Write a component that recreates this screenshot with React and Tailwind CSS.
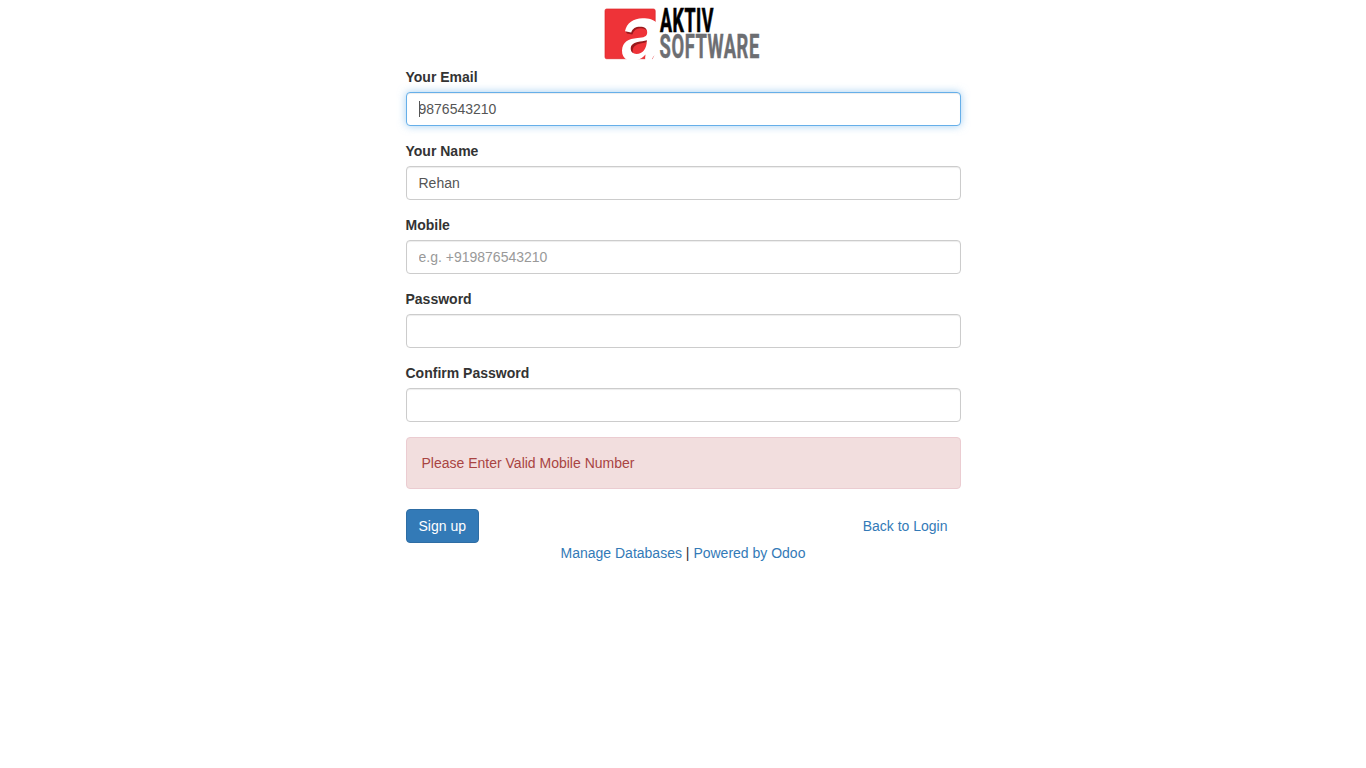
const inputBase =
  'block h-[34px] w-full rounded-[4px] border bg-white px-3 py-1.5 text-[14px] leading-5 text-[#555555] outline-none placeholder:text-[#999999]';
const inputIdle = 'border-[#cccccc] shadow-[inset_0_1px_1px_rgba(0,0,0,0.075)]';
const inputFocused =
  'border-[#66afe9] shadow-[inset_0_1px_1px_rgba(0,0,0,0.075),0_0_8px_rgba(102,175,233,0.6)]';

function Logo() {
  return (
    <svg width="156" height="52" viewBox="604 8 156 52" className="block overflow-visible" role="img" aria-label="Aktiv Software">
      <path
        d="M606.5 9H653.5Q655.2 9 655.2 10.7V52L652.3 58.7H606.5Q605 58.7 605 57V10.7Q605 9 606.5 9Z"
        fill="#ee3338"
        stroke="#dc2529"
        strokeWidth="0.7"
      />
      <path d="M625.5 31.2L627 33.4L632.3 34.4C633.5 30.8 636 28.6 640 28.3C643.5 28 645.5 29 646.8 31L645 26L635 25L630 30Z" fill="#99191c" />
      <path d="M647 39.5C637 41 630.5 42.5 630.5 49C630.5 51.5 631.5 53 633 53.8C631.5 47 635.5 44.3 640.5 43.4C643.5 43 645.5 42.5 647 41.5Z" fill="#99191c" />
      <path
        fillRule="evenodd"
        fill="#ffffff"
        d="M625 31.3C626.5 23 633.5 18.2 642.5 18.2C649 18.2 653.8 19.6 656.4 22.5V54.5C653.8 55.5 652.8 57 651.8 60H645.3C645 58.5 645.2 57 645.5 54.6C642.5 58.3 640 59.3 637 60H627.5C623.8 58.3 621.9 55 622 50.5C622.5 42 628.3 38.8 637.5 38C644 37.4 647.2 36.7 647.2 32.2C647.2 28.5 644.5 26.7 640.2 26.7C635.3 26.7 632.8 28.4 631.2 32.4ZM646.9 40.3C644 41.3 641 41.2 637.5 42C633 43 630.7 45.2 630.7 48.6C630.7 52 633 54 636.5 54C642.5 54 646.7 49.2 646.9 40.3Z"
      />
      <text
        x="660"
        y="31.9"
        fontFamily="Roboto, 'Liberation Sans', sans-serif"
        fontWeight="700"
        fontSize="33"
        letterSpacing="1"
        textLength="54"
        lengthAdjust="spacingAndGlyphs"
        fill="#000000"
        stroke="#000000"
        strokeWidth="0.7"
      >
        AKTIV
      </text>
      <text
        x="659.6"
        y="58.3"
        fontFamily="Roboto, 'Liberation Sans', sans-serif"
        fontWeight="700"
        fontSize="33"
        letterSpacing="1"
        textLength="100.2"
        lengthAdjust="spacingAndGlyphs"
        fill="#6d6e72"
        stroke="#6d6e72"
        strokeWidth="0.5"
      >
        SOFTWARE
      </text>
    </svg>
  );
}

function Field({ label, type = 'text', value, placeholder, focused }) {
  return (
    <label className="mb-[15px] block">
      <span className="mb-[5px] block font-bold">{label}</span>
      <span className="relative block">
        <input
          type={type}
          defaultValue={value}
          placeholder={placeholder}
          className={`${inputBase} ${focused ? inputFocused : inputIdle}`}
        />
        {focused && <span className="absolute left-[13px] top-[9px] h-4 w-px bg-[#555555]" />}
      </span>
    </label>
  );
}

export default function App() {
  return (
    <main className="min-h-screen bg-white font-['Liberation_Sans',Arial,sans-serif] text-[14px] leading-5 text-[#333333]">
      <div className="mx-auto w-[555px]">
        <div className="flex h-[67px] justify-center pt-2 pr-[2px]">
          <Logo />
        </div>
        <form>
          <Field label="Your Email" value="9876543210" focused />
          <Field label="Your Name" value="Rehan" />
          <Field label="Mobile" placeholder="e.g. +919876543210" />
          <Field label="Password" type="password" />
          <Field label="Confirm Password" type="password" />
          <p className="mb-5 rounded-[4px] border border-[#ebccd1] bg-[#f2dede] p-[15px] text-[#a94442]">
            Please Enter Valid Mobile Number
          </p>
          <div className="flex items-center justify-between">
            <button
              type="button"
              className="h-[34px] rounded-[4px] border border-[#2e6da4] bg-[#337ab7] px-3 text-white"
            >
              Sign up
            </button>
            <a href="#login" className="border border-transparent px-3 py-1.5 text-[#337ab7]">
              Back to Login
            </a>
          </div>
        </form>
        <footer className="text-center">
          <a href="#databases" className="text-[#337ab7]">Manage Databases</a>
          {' | '}
          <a href="#odoo" className="text-[#337ab7]">Powered by Odoo</a>
        </footer>
      </div>
    </main>
  );
}
